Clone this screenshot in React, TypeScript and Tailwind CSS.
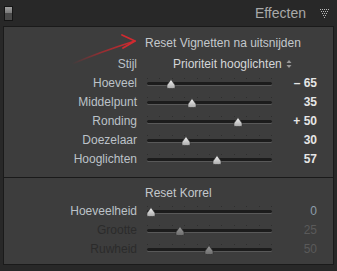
import type { FC } from 'react'

interface SliderRow {
  label: string
  value: string
  f: number
  dim?: boolean
}

const vignetteRows: SliderRow[] = [
  { label: 'Hoeveel', value: '– 65', f: 0.175 },
  { label: 'Middelpunt', value: '35', f: 0.35 },
  { label: 'Ronding', value: '+ 50', f: 0.75 },
  { label: 'Doezelaar', value: '30', f: 0.3 },
  { label: 'Hooglichten', value: '57', f: 0.57 },
]

const grainRows: SliderRow[] = [
  { label: 'Hoeveelheid', value: '0', f: 0 },
  { label: 'Grootte', value: '25', f: 0.25, dim: true },
  { label: 'Ruwheid', value: '50', f: 0.5, dim: true },
]

const TICKS = [0, 1, 2, 3, 4, 5, 6, 7, 8, 9, 10]

function Thumb({ dim }: { dim?: boolean }) {
  const id = dim ? 'thumbDim' : 'thumbLit'
  return (
    <svg width="10" height="10" viewBox="0 0 10 10">
      <defs>
        <linearGradient id={id} x1="0" y1="0" x2="0" y2="1">
          <stop offset="0" stopColor={dim ? '#9a9a9a' : '#f4f4f4'} />
          <stop offset="1" stopColor={dim ? '#6c6c6c' : '#a8a8a8'} />
        </linearGradient>
      </defs>
      <path
        d="M5 0.5 L8.6 5.5 Q9.6 7 9 8.4 Q8.4 9.6 6.8 9.6 L3.2 9.6 Q1.6 9.6 1 8.4 Q0.4 7 1.4 5.5 Z"
        fill={`url(#${id})`}
        stroke="#2a2a2a"
        strokeWidth="0.6"
      />
    </svg>
  )
}

const Slider: FC<{ f: number; dim?: boolean }> = ({ f, dim }) => (
  <div className="relative h-full w-[125px] shrink-0">
    {/* tick marks */}
    {TICKS.map((t) => (
      <span
        key={t}
        className="absolute top-[4px] h-px w-px bg-[#2e2e2e]"
        style={{ left: Math.round(t * 12.4) }}
      />
    ))}
    {/* track */}
    <div className="absolute left-0 right-0 top-[8px] h-[3px] rounded-full bg-[#1c1c1c] shadow-[0_1px_0_#595959]" />
    <div className="absolute top-[5px]" style={{ left: Math.round(4 + f * 116 - 5) }}>
      <Thumb dim={dim} />
    </div>
  </div>
)

const Row: FC<{ row: SliderRow; valueClass: string }> = ({ row, valueClass }) => (
  <div className="flex h-[19px] items-center">
    <span
      className={`w-[133px] shrink-0 text-right leading-[19px] ${
        row.dim ? 'text-[#2b2b2b]' : 'text-[#bcc2c8]'
      }`}
    >
      {row.label}
    </span>
    <div className="ml-[10px] h-full">
      <Slider f={row.f} dim={row.dim} />
    </div>
    <span className={`w-[45px] shrink-0 text-right leading-[19px] ${valueClass}`}>{row.value}</span>
  </div>
)

export default function App() {
  return (
    <div className="relative h-[271px] w-[337px] overflow-hidden bg-[#282828] font-['Liberation_Sans',Arial,sans-serif] text-[12px]">
      {/* Header */}
      <div className="flex h-[26px] items-center">
        <div className="ml-[4px] flex h-[15px] w-[9px] flex-col border border-[#151515]">
          <div className="h-1/2 bg-gradient-to-b from-[#a0a0a0] to-[#7a7a7a]" />
          <div className="h-1/2 bg-[#4a4a4a]" />
        </div>
        <span className="ml-auto text-[14px] text-[#a9a9a9]">Effecten</span>
        <svg className="ml-[14px] mr-[8px]" width="9" height="9" viewBox="0 0 9 9">
          {[
            [0, 2, 4, 6, 8],
            [1, 3, 5, 7],
            [2, 4, 6],
            [3, 5],
            [4],
          ].map((xs, r) => xs.map((x) => <rect key={`${r}-${x}`} x={x} y={r * 2} width="1" height="1" fill="#b8b8b8" />))}
        </svg>
      </div>

      {/* Panel */}
      <div className="mx-[3px] border border-[#1a1a1a] bg-[#3d3d3d]">
        <div className="pt-[6px] pb-[8px] pr-[14px]">
          <div className="flex h-[19px] items-center pl-[141px] text-[#c4c8cc]">Reset Vignetten na uitsnijden</div>
          <div className="mt-[2px] flex h-[19px] items-center">
            <span className="w-[133px] text-right text-[#bcc2c8]">Stijl</span>
            <span className="ml-[36px] text-[#d4d6d8]">Prioriteit hooglichten</span>
            <svg className="ml-[4px]" width="6" height="10" viewBox="0 0 6 10">
              <path d="M0.5 4 L3 1 L5.5 4 Z" fill="#9a9a9a" />
              <path d="M0.5 6 L3 9 L5.5 6 Z" fill="#9a9a9a" />
            </svg>
          </div>
          <div className="mt-px">
            {vignetteRows.map((r) => (
              <Row key={r.label} row={r} valueClass="font-bold text-[#e6e6e6]" />
            ))}
          </div>
        </div>

        <div className="h-px bg-[#1a1a1a]" />

        <div className="pt-[5px] pb-[5px] pr-[14px]">
          <div className="flex h-[19px] items-center pl-[141px] text-[#c4c8cc]">Reset Korrel</div>
          {grainRows.map((r) => (
            <Row
              key={r.label}
              row={r}
              valueClass={r.dim ? 'text-[#5a5a5a]' : 'text-[#8e9eac]'}
            />
          ))}
        </div>
      </div>

      {/* Red annotation arrow */}
      <svg className="pointer-events-none absolute left-0 top-0" width="337" height="271" viewBox="0 0 337 271">
        <defs>
          <linearGradient id="arrowFade" x1="72" y1="64" x2="135" y2="41" gradientUnits="userSpaceOnUse">
            <stop offset="0" stopColor="#c0262c" stopOpacity="0" />
            <stop offset="0.5" stopColor="#c0262c" stopOpacity="0.7" />
            <stop offset="1" stopColor="#d02a30" stopOpacity="1" />
          </linearGradient>
        </defs>
        <path d="M72 64 Q100 52 135 41" stroke="url(#arrowFade)" strokeWidth="1.6" fill="none" strokeLinecap="round" />
        <path d="M122 35 L135 41 L123 48" stroke="#d02a30" strokeWidth="1.8" fill="none" strokeLinecap="round" strokeLinejoin="round" />
      </svg>
    </div>
  )
}
